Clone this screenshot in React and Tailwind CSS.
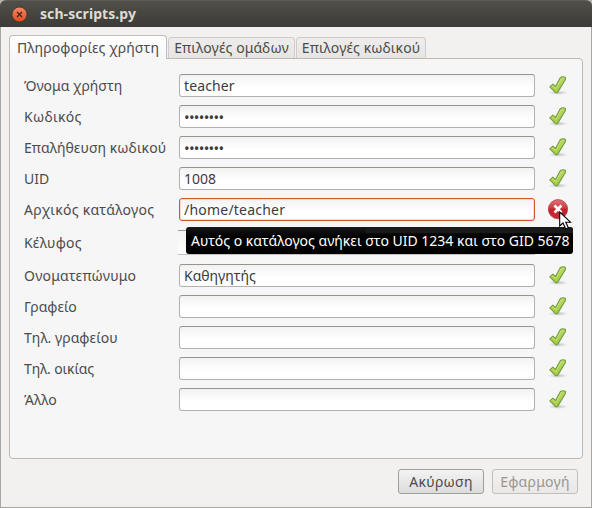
import React from 'react';

function Check() {
  return (
    <svg width="22" height="23" viewBox="0 -0.7 22 23" className="block">
      <defs>
        <linearGradient id="leaf" x1="0" y1="0" x2="0" y2="1">
          <stop offset="0" stopColor="#bcd968" />
          <stop offset="1" stopColor="#a5cb3c" />
        </linearGradient>
        <radialGradient id="shade">
          <stop offset="0" stopColor="#000" stopOpacity="0.22" />
          <stop offset="1" stopColor="#000" stopOpacity="0" />
        </radialGradient>
      </defs>
      <ellipse cx="11" cy="18" rx="10" ry="2.3" fill="url(#shade)" />
      <path
        d="M2.8 12.2 L5.9 9.4 L8.5 11.9 L13.4 2.8 Q15.8 1.4 18.4 2.6 L18.4 4.8 L10.9 17.2 Q9.6 18.8 8.3 17.7 Z"
        fill="url(#leaf)"
        stroke="#6f9c45"
        strokeWidth="1.1"
        strokeLinejoin="round"
      />
      <path d="M4.6 12.2 L5.9 11.1 L8.9 13.9 L14.3 3.8" fill="none" stroke="#d8ec88" strokeWidth="0.8" opacity="0.75" />
    </svg>
  );
}

function ErrorIcon() {
  return (
    <svg width="22" height="23" viewBox="0 0 22 23" className="block">
      <defs>
        <linearGradient id="red" x1="0" y1="0" x2="0" y2="1">
          <stop offset="0" stopColor="#e0747a" />
          <stop offset="0.45" stopColor="#cb3a42" />
          <stop offset="0.5" stopColor="#c3202b" />
          <stop offset="1" stopColor="#cc2a35" />
        </linearGradient>
      </defs>
      <circle cx="11" cy="11.2" r="9.6" fill="url(#red)" stroke="#b23a44" strokeWidth="0.8" />
      <path d="M7.5 7.5 L14.5 14.5 M14.5 7.5 L7.5 14.5" stroke="#fff" strokeWidth="2.7" />
    </svg>
  );
}

const rows = [
  { label: 'Όνομα χρήστη', value: 'teacher', valueTracking: 'tracking-[0.12px]' },
  { label: 'Κωδικός', value: '••••••••', tracking: 'tracking-[0.3px]', valueTracking: 'text-[15px] tracking-[-0.72px]' },
  { label: 'Επαλήθευση κωδικού', value: '••••••••', tracking: 'tracking-[0.06px]', valueTracking: 'text-[15px] tracking-[-0.72px]' },
  { label: 'UID', value: '1008' },
  { label: 'Αρχικός κατάλογος', value: '/home/teacher', tracking: 'tracking-[0.28px]', valueTracking: 'tracking-[0.22px]', error: true },
  { label: 'Κέλυφος', value: '', tracking: 'tracking-[0.2px]', combo: true },
  { label: 'Ονοματεπώνυμο', value: 'Καθηγητής', tracking: 'tracking-[0.22px]' },
  { label: 'Γραφείο', value: '' },
  { label: 'Τηλ. γραφείου', value: '', tracking: 'tracking-[0.06px]' },
  { label: 'Τηλ. οικίας', value: '', tracking: 'tracking-[-0.1px]' },
  { label: 'Άλλο', value: '' },
];

function Row({ label, value, tracking = '', valueTracking = '', error, combo }) {
  return (
    <div className={`flex items-center ${combo ? 'h-[27px]' : 'h-[23px]'}`}>
      <span className={`w-[155px] shrink-0 ${tracking}`}>{label}</span>
      {combo ? (
        <div className="-ml-px h-[25px] w-[357px] border-y border-t-[#a09b96] border-b-[#c4c0bc] bg-gradient-to-b from-[#f4f4f4] to-white" />
      ) : (
        <div
          className={`flex h-[23px] w-[356px] items-center rounded-[3px] border bg-gradient-to-b from-[#f2f2f2] to-white to-60% pl-[4px] text-[#3c3c3c] ${
            error ? 'border-[#d0562c] shadow-[inset_0_0_0_1px_#f6dccf]' : 'border-[#b5b0ac] border-t-[#99938e]'
          }`}
        >
          <span className={valueTracking}>{value}</span>
        </div>
      )}
      {!combo && <div className="ml-[12px]">{error ? <ErrorIcon /> : <Check />}</div>}
    </div>
  );
}

export default function App() {
  return (
    <div className="relative flex h-[508px] w-[592px] flex-col overflow-hidden bg-[#b5b4b1] font-['Noto_Sans',sans-serif] text-[14px] leading-[20px] whitespace-nowrap text-[#4c4c4c]">
      <header className="flex h-[27px] shrink-0 items-center rounded-t-[6px] border-t border-[#5d5b55] bg-gradient-to-b from-[#504f49] to-[#3c3b37] pl-[11px]">
        <svg width="17" height="17" viewBox="0 0 17 17">
          <defs>
            <linearGradient id="close" x1="0" y1="0" x2="0" y2="1">
              <stop offset="0" stopColor="#f58a66" />
              <stop offset="1" stopColor="#df4a1c" />
            </linearGradient>
          </defs>
          <circle cx="8.5" cy="8.5" r="7.5" fill="url(#close)" stroke="#35332f" strokeWidth="0.8" />
          <path d="M6 6 L11 11 M11 6 L6 11" stroke="#4b2114" strokeWidth="1.3" />
        </svg>
        <span className="ml-[12px] text-[14px] font-bold tracking-[0.08px] text-[#dfdbd2]">sch-scripts.py</span>
      </header>
      <main className="flex grow flex-col border-x border-b border-[#aaa6a1] bg-[#f2f1f0] pt-[8px] pl-[8px]">
        <div className="relative z-10 -mb-px flex items-end">
          <div className="flex h-[24px] w-[158px] items-center justify-center rounded-t-[4px] border border-b-0 border-[#c1bcb8] bg-gradient-to-b from-white to-[#f6f6f6] tracking-[0.1px]">Πληροφορίες χρήστη</div>
          <div className="mb-px ml-px flex h-[21px] w-[127px] items-center justify-center rounded-t-[4px] border border-b-0 border-[#cfccc9] bg-gradient-to-b from-[#eeedec] to-[#e6e5e3] tracking-[0.1px]">Επιλογές ομάδων</div>
          <div className="mb-px ml-px flex h-[21px] w-[130px] items-center justify-center rounded-t-[4px] border border-b-0 border-[#cfccc9] bg-gradient-to-b from-[#eeedec] to-[#e6e5e3] tracking-[0.1px]">Επιλογές κωδικού</div>
        </div>
        <section className="flex h-[401px] w-[574px] flex-col gap-[8px] rounded-b-[4px] rounded-tr-[4px] border border-[#bdb8b3] bg-[#f6f6f6] pt-[15px] pl-[14px]">
          {rows.map((row) => (
            <Row key={row.label} {...row} />
          ))}
        </section>
        <footer className="mt-[10px] flex gap-[8px] pl-[389px]">
          <div className="flex h-[25px] w-[86px] items-center justify-center rounded-[3px] border border-[#a19d99] bg-gradient-to-b from-[#f3f3f3] to-[#dcdcdc] tracking-[0.3px]">Ακύρωση</div>
          <div className="flex h-[25px] w-[86px] items-center justify-center rounded-[3px] border border-[#c1bebb] bg-gradient-to-b from-[#f3f2f1] to-[#e9e8e7] tracking-[0.25px] text-[#9a9692]">Εφαρμογή</div>
        </footer>
      </main>
      <div className="absolute top-[227px] left-[186px] z-20 flex h-[27px] w-[387px] items-center rounded-[3px] bg-gradient-to-b from-[#1b1b1b] to-black to-60% pl-[5px] text-white">
        <div className="absolute top-0 right-0 h-[6px] w-[207px] rounded-tr-[3px] bg-[#1a1a1a]" />
        <span className="relative">Αυτός ο κατάλογος ανήκει στο UID 1234 και στο GID 5678</span>
      </div>
      <svg width="14" height="20" viewBox="0 0 14 20" className="absolute top-[211px] left-[559px] z-30">
        <path d="M0.7 1 V15 L4 12 L6.7 18 L9.3 16.8 L6.8 11.2 H11.5 Z" fill="#fff" stroke="#000" strokeWidth="1.1" />
      </svg>
    </div>
  );
}
